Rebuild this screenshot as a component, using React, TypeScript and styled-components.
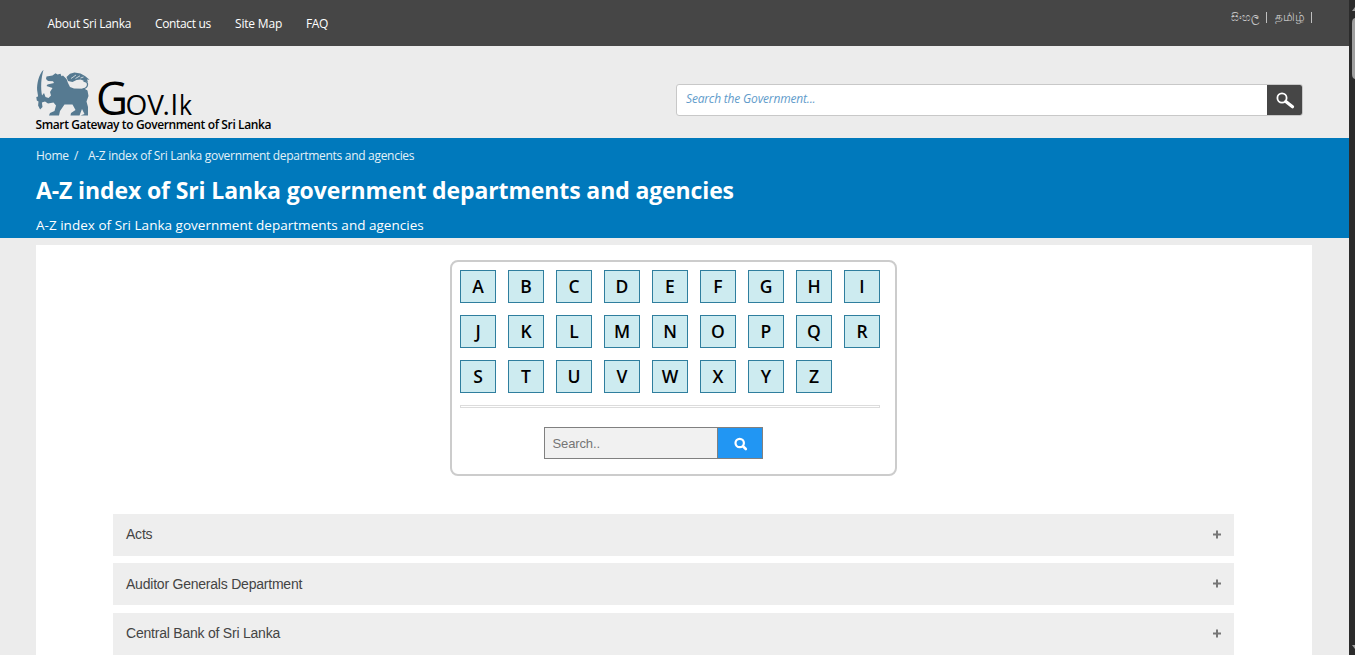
import React from "react";
import styled, { createGlobalStyle } from "styled-components";

const GlobalStyle = createGlobalStyle`
  * { box-sizing: border-box; }
  html, body { margin: 0; padding: 0; height: 100%; overflow: hidden; }
  body { font-family: "Open Sans", "Noto Sans", sans-serif; background: #ececec; }
  a { color: inherit; text-decoration: none; }
`;

const Window = styled.div`
  display: flex;
  height: 655px;
  overflow: hidden;
`;

const Page = styled.div`
  width: 1349px;
  height: 655px;
  overflow: hidden;
  background: #ececec;
`;

const ScrollTrack = styled.div`
  flex: 1;
  display: flex;
  flex-direction: column;
  align-items: flex-end;
  justify-content: space-between;
  background: #2b2b2b;
`;

const TopBar = styled.header`
  display: flex;
  justify-content: space-between;
  height: 46px;
  padding: 0 37px 0 47.5px;
  background: #464646;
`;

const Nav = styled.nav`
  display: flex;
  gap: 24px;
  line-height: 46px;
  padding-top: 1px;
  font-size: 12px;
  color: #fff;
`;

const NavLink = styled.a<{ $w: number; $ls: number }>`
  width: ${(p) => p.$w}px;
  letter-spacing: ${(p) => p.$ls}px;
  white-space: nowrap;
`;

const Languages = styled.div`
  display: flex;
  height: 11px;
  margin-top: 12px;
  font-size: 11px;
  line-height: 9px;
  color: #c4c4c4;
`;

const Language = styled.a<{ $w: number; $indent?: number; $size?: number }>`
  width: ${(p) => p.$w}px;
  padding-left: ${(p) => p.$indent ?? 0}px;
  font-size: ${(p) => p.$size ?? 11}px;
  border-right: 1px solid #bfbfbf;
  white-space: nowrap;
`;

const Brand = styled.div`
  display: flex;
  justify-content: space-between;
  height: 92px;
  padding: 22px 46px 0 35.5px;
`;

const Logo = styled.div`
  width: 260px;
`;

const LogoArt = styled.svg`
  display: block;
  overflow: visible;
`;

const Tagline = styled.div`
  margin-top: -1px;
  font-size: 12px;
  line-height: 16px;
  font-weight: 600;
  letter-spacing: -0.38px;
  color: #000;
  white-space: nowrap;
`;

const SiteSearch = styled.div`
  display: flex;
  width: 627px;
  height: 32px;
  margin-top: 16px;
  border: 1px solid #c8c8c8;
  border-radius: 3px;
  background: #fff;
  overflow: hidden;
`;

const SiteSearchText = styled.div`
  flex: 1;
  padding-left: 9px;
  font-size: 12px;
  line-height: 28px;
  font-style: italic;
  letter-spacing: -0.17px;
  color: #629ccb;
`;

const SiteSearchButton = styled.div`
  display: flex;
  width: 35px;
  background: #464646;
`;

const Banner = styled.section`
  height: 100px;
  padding: 8px 0 0 36px;
  background: #0079bc;
  color: #fff;
  white-space: nowrap;
`;

const Crumbs = styled.div`
  display: flex;
  font-size: 12px;
  line-height: 20px;
  letter-spacing: -0.3px;
  color: #e4f1f8;
`;

const Crumb = styled.span<{ $w?: number }>`
  width: ${(p) => (p.$w ? p.$w + "px" : "auto")};
`;

const Title = styled.h1`
  margin: 7px 0 0;
  font-size: 23px;
  line-height: 34px;
  font-weight: 700;
  letter-spacing: -0.12px;
`;

const Subtitle = styled.div`
  margin-top: 8px;
  font-size: 13.5px;
  line-height: 20px;
  letter-spacing: 0.02px;
`;

const Panel = styled.main`
  width: 1276px;
  height: 410px;
  margin: 7px 0 0 36px;
  padding-top: 15px;
  background: #fff;
`;

const IndexBox = styled.div`
  width: 447px;
  height: 216px;
  margin-left: 414px;
  padding: 8px;
  border: 2px solid #ccc;
  border-radius: 8px;
`;

const Letters = styled.div`
  display: grid;
  grid-template-columns: repeat(9, 36px);
  grid-auto-rows: 33px;
  gap: 12px;
`;

const Letter = styled.a`
  display: flex;
  align-items: center;
  justify-content: center;
  border: 1px solid #2f7e9e;
  background: #cdebf0;
  font-size: 17.5px;
  line-height: 31px;
  font-weight: 600;
  color: #000;
`;

const Divider = styled.div`
  width: 420px;
  height: 3px;
  margin-top: 12px;
  border: 1px solid #dcdcdc;
`;

const IndexSearch = styled.div`
  display: flex;
  width: 219px;
  height: 32px;
  margin: 19px 0 0 84px;
  border: 1px solid #808080;
  background: #f1f1f1;
`;

const IndexSearchText = styled.div`
  width: 173px;
  padding-left: 7.5px;
  border-right: 1px solid #808080;
  font-family: "Liberation Sans", Arial, sans-serif;
  font-size: 13px;
  line-height: 31px;
  letter-spacing: -0.12px;
  color: #757575;
`;

const IndexSearchButton = styled.div`
  display: flex;
  flex: 1;
  background: #2196f3;
`;

const Accordion = styled.div`
  display: flex;
  flex-direction: column;
  width: 1121px;
  margin: 38px 0 0 77px;
`;

const AccordionRow = styled.div`
  display: flex;
  flex: none;
  justify-content: space-between;
  height: 42px;
  padding: 0 13px;
  background: #eee;
  font-family: "Liberation Sans", Arial, sans-serif;
  font-size: 14px;
  line-height: 41px;
  letter-spacing: -0.22px;
  color: #444;

  & + & {
    margin-top: 7px;
    line-height: 42px;
  }

  & + & + & {
    margin-top: 8px;
    line-height: 41px;
  }
`;

const Plus = styled.svg`
  flex: none;
  margin-top: 16px;
`;

const NAV = [
  { label: "About Sri Lanka", w: 83.5, ls: -0.28 },
  { label: "Contact us", w: 56, ls: -0.35 },
  { label: "Site Map", w: 47, ls: -0.18 },
  { label: "FAQ", w: 24, ls: -0.4 },
];

const DEPARTMENTS = ["Acts", "Auditor Generals Department", "Central Bank of Sri Lanka"];

function GovLogo() {
  return (
    <LogoArt width="160" height="50" viewBox="35.5 68 160 50">
      <path
        fill="#567a91"
        d="M43 69.800C38 75 36.400 84 36.600 90L37.600 96.500L35.800 97L36.300 100.500L38 101.500L37.600 105.500L39.600 109.500L42 107L41.400 102.500L44.500 101.500L47.500 103.500L53 102.500L55.500 105.500L54 111L49.500 113L48.500 115.500H58.500L59.500 111L64 104.500H72L75 110L70.500 113L70 115.500H79L81.500 109L84 114L80 115.500H87.500V107L86 101.500L88 96L87 90.500L84 88.800L73.500 88.500L69.500 87L67.500 83L66 79L62.500 75.500L61 76.200L60 73.800L57 74.500L55 73.200L52 75.500L46 76.500L45.500 79L47.500 81L52.500 81.300L53.500 83L47 84.500L46 86L52 88L49.500 92L50.500 95.500L48 98L45 97L43.500 93L41.500 95.500C40 88 40.500 78 43 69.800Z"
      />
      <path
        fill="#567a91"
        d="M66 77L69.500 73.800L74 72.500L80 73.500L84.500 76L89 79.700L86.500 79.400L87.500 82L84 81L80 79.500L76 80L72 82L67.500 81Z"
      />
      <path
        d="M83 81Q87.500 81.500 87 85Q86.500 88.500 82 88.800"
        fill="none"
        stroke="#567a91"
        strokeWidth="1.300"
      />
      <path
        d="M70.500 78.500L75.500 75M75 78.500L79.500 75.800M80 78L83 77"
        fill="none"
        stroke="#d5dce0"
        strokeWidth="0.900"
      />
      <g fontFamily="'Open Sans', sans-serif" fill="#000">
        <text x="95.500" y="115" fontSize="45" textLength="32" lengthAdjust="spacingAndGlyphs">G</text>
        <text x="125" y="115" fontSize="27" textLength="38.500" lengthAdjust="spacingAndGlyphs">OV</text>
        <text x="162" y="115" fontSize="28">.</text>
        <text x="170.300" y="115" fontSize="28">l</text>
        <text x="178.500" y="115" fontSize="28" textLength="13" lengthAdjust="spacingAndGlyphs">k</text>
      </g>
    </LogoArt>
  );
}

export default function App() {
  return (
    <Window>
      <GlobalStyle />
      <Page>
        <TopBar>
          <Nav>
            {NAV.map((n) => (
              <NavLink key={n.label} $w={n.w} $ls={n.ls}>{n.label}</NavLink>
            ))}
          </Nav>
          <Languages>
            <Language $w={36}>සිංහල</Language>
            <Language $w={45} $indent={8} $size={11.8}>தமிழ்</Language>
          </Languages>
        </TopBar>
        <Brand>
          <Logo>
            <GovLogo />
            <Tagline>Smart Gateway to Government of Sri Lanka</Tagline>
          </Logo>
          <SiteSearch>
            <SiteSearchText>Search the Government...</SiteSearchText>
            <SiteSearchButton>
              <svg width="35" height="30" viewBox="0 0 35 30">
                <circle cx="15" cy="13" r="4.6" fill="none" stroke="#fff" strokeWidth="1.8" />
                <path d="M18.800 16.500L25.500 21.800" stroke="#fff" strokeWidth="3.200" strokeLinecap="round" />
              </svg>
            </SiteSearchButton>
          </SiteSearch>
        </Brand>
        <Banner>
          <Crumbs>
            <Crumb $w={38}>Home</Crumb>
            <Crumb $w={14}>/</Crumb>
            <Crumb>A-Z index of Sri Lanka government departments and agencies</Crumb>
          </Crumbs>
          <Title>A-Z index of Sri Lanka government departments and agencies</Title>
          <Subtitle>A-Z index of Sri Lanka government departments and agencies</Subtitle>
        </Banner>
        <Panel>
          <IndexBox>
            <Letters>
              {"ABCDEFGHIJKLMNOPQRSTUVWXYZ".split("").map((l) => (
                <Letter key={l}>{l}</Letter>
              ))}
            </Letters>
            <Divider />
            <IndexSearch>
              <IndexSearchText>Search..</IndexSearchText>
              <IndexSearchButton>
                <svg width="44" height="30" viewBox="0 0 44 30">
                  <circle cx="21.7" cy="15" r="4.2" fill="none" stroke="#fff" strokeWidth="2.2" />
                  <path d="M25 18.300L27.800 21" stroke="#fff" strokeWidth="2.600" strokeLinecap="round" />
                </svg>
              </IndexSearchButton>
            </IndexSearch>
          </IndexBox>
          <Accordion>
            {DEPARTMENTS.map((d) => (
              <AccordionRow key={d}>
                <span>{d}</span>
                <Plus width="8" height="9" viewBox="0 0 8 9">
                  <path d="M0 4.500H8M4 0.500V8.500" stroke="#777" strokeWidth="2" />
                </Plus>
              </AccordionRow>
            ))}
          </Accordion>
        </Panel>
      </Page>
      <ScrollTrack>
        <svg width="3" height="90" viewBox="0 0 3 90">
          <path d="M3 7V11H0Z" fill="#9f9f9f" />
          <path d="M3 18Q0 18.500 0 23V74Q0 78.500 3 79Z" fill="#9f9f9f" />
        </svg>
        <svg width="3" height="14" viewBox="0 0 3 14">
          <path d="M0 4H3V8Z" fill="#9f9f9f" />
        </svg>
      </ScrollTrack>
    </Window>
  );
}
